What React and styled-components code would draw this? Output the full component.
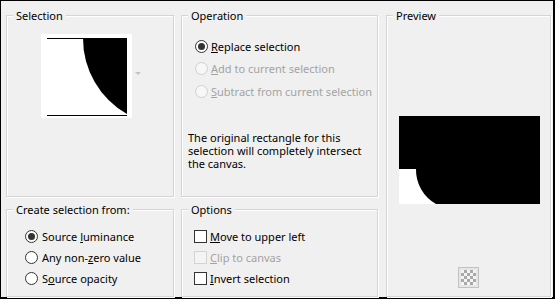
import React from 'react';
import styled, { createGlobalStyle, css } from 'styled-components';

const GlobalStyle = createGlobalStyle`
  html, body {
    margin: 0;
    padding: 0;
    background: #f0f0f0;
  }
  body {
    font-family: "Noto Sans", "Liberation Sans", sans-serif;
    font-size: 11px;
    color: #000;
  }
`;

const Dialog = styled.div`
  box-sizing: border-box;
  width: 555px;
  height: 299px;
  background: #f0f0f0;
  border-style: solid;
  border-color: #000;
  border-width: 1px 2px 2px 1px;
  padding: 14px 2px 0 5px;
  display: grid;
  grid-template-columns: 168px 7px 197px 8px 165px;
  grid-template-rows: 182px 12px 88px;
  grid-template-areas:
    "sel . op . pre"
    ". . . . pre"
    "cre . opt . pre";
`;

const Group = styled.section`
  position: relative;
  box-sizing: border-box;
  border: 1px solid #d5d5d5;
  box-shadow: 1px 1px 0 #fff, inset 1px 1px 0 #fff;
  grid-area: ${(p) => p.area};
  display: flex;
  flex-direction: column;
`;

const Legend = styled.span`
  position: absolute;
  top: -8px;
  left: 6px;
  padding: 0 3px;
  background: #f0f0f0;
  line-height: 16px;
  white-space: nowrap;
`;

const SelectionGroup = styled(Group)`
  padding: 18px 0 0 34px;
  flex-direction: row;
  align-items: flex-start;
`;

const Thumb = styled.svg`
  display: block;
  width: 91px;
  height: 84px;
`;

const DropArrow = styled.span`
  margin: 38px 0 0 3px;
  width: 0;
  height: 0;
  border-left: 3px solid transparent;
  border-right: 3px solid transparent;
  border-top: 3px solid #c4c4c4;
`;

const OperationGroup = styled(Group)`
  padding: 19px 0 0 13px;
`;

const Row = styled.label`
  display: flex;
  align-items: center;
  height: ${(p) => p.h || 21}px;
  gap: ${(p) => p.gap || 3}px;
  white-space: nowrap;
  color: ${(p) => (p.disabled ? '#a3a3a3' : '#000')};
`;

const Radio = styled.span`
  box-sizing: border-box;
  width: 13px;
  height: 13px;
  border-radius: 50%;
  border: 1px solid ${(p) => (p.disabled ? '#cfcfcf' : '#333')};
  background: ${(p) => (p.disabled ? '#f7f7f7' : '#fff')};
  display: flex;
  align-items: center;
  justify-content: center;
  flex: none;
  ${(p) => p.checked && css`
    &::after {
      content: '';
      width: 7px;
      height: 7px;
      border-radius: 50%;
      background: #333;
    }
  `}
`;

const Check = styled.span`
  box-sizing: border-box;
  width: 13px;
  height: 13px;
  flex: none;
  border: 1px solid ${(p) => (p.disabled ? '#d4d4d4' : '#333')};
  background: ${(p) => (p.disabled ? '#f4f4f4' : '#fff')};
`;

const Note = styled.p`
  margin: 28px 0 0 -7px;
  line-height: 13px;
  white-space: nowrap;
`;

const CreateGroup = styled(Group)`
  padding: 16px 0 0 18px;
`;

const OptionsGroup = styled(Group)`
  padding: 16px 0 0 12px;
`;

const PreviewGroup = styled(Group)`
  padding-top: 100px;
  align-items: center;
`;

const PreviewImage = styled.svg`
  display: block;
  width: 141px;
  height: 88px;
  margin-left: 1px;
`;

const CheckerButton = styled.span`
  box-sizing: border-box;
  margin: auto 0 8px 0;
  width: 21px;
  height: 21px;
  border: 1px solid #c2c2c2;
  background: #e6e6e6;
  padding: 2px;
  &::before {
    content: '';
    display: block;
    width: 15px;
    height: 15px;
    background: repeating-conic-gradient(#a9a9a9 0 25%, #f4f4f4 0 50%) 0 0 / 6px 6px;
  }
`;

const App = () => (
  <>
    <GlobalStyle />
    <Dialog>
      <SelectionGroup area="sel">
        <Legend>Selection</Legend>
        <Thumb viewBox="0 0 91 84">
          <rect width="91" height="84" fill="#fff" />
          <path d="M42 4 L86 4 L86 80 A87 87 0 0 1 42 4 Z" fill="#000" />
          <rect x="6" y="4" width="80" height="1" fill="#000" />
          <rect x="6" y="81" width="80" height="1" fill="#000" />
        </Thumb>
        <DropArrow />
      </SelectionGroup>

      <OperationGroup area="op">
        <Legend>Operation</Legend>
        <Row h={22.5}>
          <Radio checked />
          <span><u>R</u>eplace selection</span>
        </Row>
        <Row h={22.5} disabled>
          <Radio disabled />
          <span><u>A</u>dd to current selection</span>
        </Row>
        <Row h={22.5} disabled>
          <Radio disabled />
          <span><u>S</u>ubtract from current selection</span>
        </Row>
        <Note>
          The original rectangle for this
          <br />
          selection will completely intersect
          <br />
          the canvas.
        </Note>
      </OperationGroup>

      <CreateGroup area="cre">
        <Legend>Create selection from:</Legend>
        <Row gap={4}>
          <Radio checked />
          <span>Source <u>l</u>uminance</span>
        </Row>
        <Row gap={4}>
          <Radio />
          <span>Any non-<u>z</u>ero value</span>
        </Row>
        <Row gap={4}>
          <Radio />
          <span>S<u>o</u>urce opacity</span>
        </Row>
      </CreateGroup>

      <OptionsGroup area="opt">
        <Legend>Options</Legend>
        <Row gap={3}>
          <Check />
          <span><u>M</u>ove to upper left</span>
        </Row>
        <Row gap={3} disabled>
          <Check disabled />
          <span><u>C</u>lip to canvas</span>
        </Row>
        <Row gap={3}>
          <Check />
          <span><u>I</u>nvert selection</span>
        </Row>
      </OptionsGroup>

      <PreviewGroup area="pre">
        <Legend>Preview</Legend>
        <PreviewImage viewBox="0 0 141 88">
          <rect width="141" height="88" fill="#000" />
          <path d="M0 53 L17 53 A39 39 0 0 0 37 88 L0 88 Z" fill="#fff" />
        </PreviewImage>
        <CheckerButton />
      </PreviewGroup>
    </Dialog>
  </>
);

export default App;
